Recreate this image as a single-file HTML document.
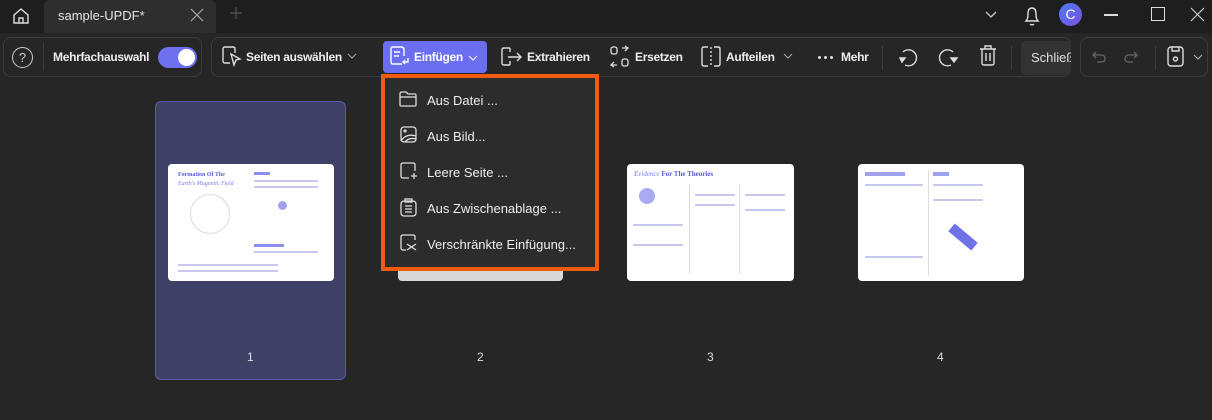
<!DOCTYPE html>
<html><head><meta charset="utf-8"><style>
*{box-sizing:border-box;margin:0;padding:0}
body{width:1212px;height:420px;background:#262626;font-family:"Liberation Sans",sans-serif;color:#e8e8e8;position:relative;overflow:hidden}
.abs{position:absolute}
.top{left:0;top:0;width:1212px;height:33px;background:#1e1e1e}
.tb{top:33px;left:0;width:1212px;height:48px;background:#262626}
.grp{border:1px solid #3c3c3c;border-radius:8px;height:40px;top:37px}
.t{font-size:12px;font-weight:bold;color:#eee;white-space:nowrap;letter-spacing:-0.3px}
svg{position:absolute;overflow:visible}
.page{background:#fff;border-radius:4px}
.menu{left:381px;top:74px;width:218px;height:197px;border:4px solid #f25a0e;background:#2c2c2c}
.mi{position:absolute;left:42px;font-size:13px;color:#eee}
.lbl{font-size:12px;color:#ddd;top:350px}
.ln{height:2px;background:#c8c8ee}
</style></head><body>
<div class="abs top"></div>
<svg style="left:12px;top:7px" width="18" height="18" viewBox="0 0 18 18" fill="none" stroke="#ddd" stroke-width="1.4"><path d="M2 8 L9 2 L16 8 V16 H2 Z"/><path d="M7 16 V11 H11 V16"/></svg>
<div class="abs" style="left:44px;top:0;width:172px;height:33px;background:#2e2e2e;border-radius:6px 6px 0 0"></div>
<div class="abs" style="left:58px;top:8px;font-size:13px;color:#e5e5e5">sample-UPDF*</div>
<svg style="left:191px;top:9px" width="12" height="12" fill="none" stroke="#aaa" stroke-width="1.2"><path d="M0 0 L12 12 M12 0 L0 12"/></svg>
<svg style="left:230px;top:7px" width="12" height="12" fill="none" stroke="#555" stroke-width="1.2"><path d="M6 0 V12 M0 6 H12"/></svg>
<svg style="left:985px;top:11px" width="12" height="8" fill="none" stroke="#ccc" stroke-width="1.3"><path d="M1 1 L6 6 L11 1"/></svg>
<svg style="left:1024px;top:5px" width="16" height="22" fill="none" stroke="#ddd" stroke-width="1.4"><path d="M2 16 Q4 14 4 9 Q4 3 8 3 Q12 3 12 9 Q12 14 14 16 Z M6 19 Q8 21 10 19"/></svg>
<div class="abs" style="left:1059px;top:3px;width:23px;height:23px;border-radius:50%;background:linear-gradient(135deg,#4a7cf5,#7b4fe0);color:#fff;font-size:14px;text-align:center;line-height:23px">C</div>
<div class="abs" style="left:1104px;top:14px;width:14px;height:1.5px;background:#ddd"></div>
<div class="abs" style="left:1151px;top:7px;width:14px;height:14px;border:1.4px solid #ddd"></div>
<svg style="left:1191px;top:8px" width="13" height="13" fill="none" stroke="#ccc" stroke-width="1.2"><path d="M0 0 L13 13 M13 0 L0 13"/></svg>

<div class="abs tb"></div>
<div class="abs grp" style="left:3px;width:199px"></div>
<div class="abs" style="left:12px;top:47px;width:21px;height:21px;border:1.4px solid #ccc;border-radius:50%;font-size:13px;text-align:center;line-height:19px;color:#ccc">?</div>
<div class="abs" style="left:43px;top:43px;width:1px;height:28px;background:#3c3c3c"></div>
<div class="abs t" style="left:53px;top:50px">Mehrfachauswahl</div>
<div class="abs" style="left:158px;top:47px;width:39px;height:21px;border-radius:11px;background:#6e70f0"></div>
<div class="abs" style="left:178px;top:49px;width:17px;height:17px;border-radius:50%;background:#fff"></div>

<div class="abs grp" style="left:211px;width:860px"></div>
<svg style="left:222px;top:46px" width="20" height="22" fill="none" stroke="#ddd" stroke-width="1.4"><path d="M8 17 H3 Q1 17 1 15 V3 Q1 1 3 1 H11 Q13 1 13 3 V7"/><path d="M9 8 L18 13 L14 14 L12 19 Z"/></svg>
<div class="abs t" style="left:246px;top:50px">Seiten auswählen</div>
<svg style="left:348px;top:54px" width="8" height="5" fill="none" stroke="#aaa"><path d="M0 0 L4 4 L8 0"/></svg>
<div class="abs" style="left:383px;top:41px;width:104px;height:32px;border-radius:4px;background:#6c6ef0"></div>
<svg style="left:390px;top:46px" width="20" height="22" fill="none" stroke="#fff" stroke-width="1.4"><path d="M12 18 H3 Q1 18 1 16 V3 Q1 1 3 1 H11 Q14 1 14 4 V10"/><path d="M4 6 H10 M4 10 H9"/><path d="M18 12 V16 H13 M15 14 L13 16 L15 18"/></svg>
<div class="abs t" style="left:414px;top:50px;color:#fff">Einfügen</div>
<svg style="left:469px;top:56px" width="8" height="5" fill="none" stroke="#fff"><path d="M0 0 L4 4 L8 0"/></svg>
<svg style="left:500px;top:46px" width="24" height="22" fill="none" stroke="#ddd" stroke-width="1.4"><path d="M10 19 H4 Q2 19 2 17 V4 Q2 2 4 2 H10"/><path d="M10 2 V6 M10 15 V19 M8 11 H21 M17 7 L21 11 L17 15"/></svg>
<div class="abs t" style="left:527px;top:50px">Extrahieren</div>
<svg style="left:610px;top:46px" width="20" height="22" fill="none" stroke="#ddd" stroke-width="1.3"><rect x="1" y="1" width="6" height="7" rx="2"/><rect x="12" y="13" width="6" height="7" rx="2"/><path d="M12 2 L18 2 M15 0 L18 2 L15 5 M7 19 H1 M4 16 L1 19 L4 21"/></svg>
<div class="abs t" style="left:635px;top:50px">Ersetzen</div>
<svg style="left:701px;top:46px" width="20" height="22" fill="none" stroke="#ddd" stroke-width="1.4"><path d="M7 1 H3 Q1 1 1 3 V18 Q1 20 3 20 H7 M13 1 H17 Q19 1 19 3 V18 Q19 20 17 20 H13"/><path d="M10 1 V20" stroke-dasharray="2 2"/></svg>
<div class="abs t" style="left:726px;top:50px">Aufteilen</div>
<svg style="left:784px;top:54px" width="8" height="5" fill="none" stroke="#aaa"><path d="M0 0 L4 4 L8 0"/></svg>
<div class="abs" style="left:818px;top:56px;width:3px;height:3px;border-radius:50%;background:#ddd;box-shadow:6px 0 #ddd,12px 0 #ddd"></div>
<div class="abs t" style="left:841px;top:50px">Mehr</div>
<div class="abs" style="left:882px;top:46px;width:1px;height:24px;background:#3c3c3c"></div>
<svg style="left:897px;top:46px" width="22" height="22" fill="none" stroke="#ddd" stroke-width="1.4"><path d="M6 6 A8 8 0 1 1 8 19"/><path d="M3 12 L5 16 L8 12 Z" fill="#ddd"/></svg>
<svg style="left:937px;top:46px" width="22" height="22" fill="none" stroke="#ddd" stroke-width="1.4"><path d="M16 6 A8 8 0 1 0 14 19"/><path d="M14 12 L17 16 L20 12 Z" fill="#ddd"/></svg>
<svg style="left:978px;top:44px" width="20" height="24" fill="none" stroke="#ddd" stroke-width="1.4"><path d="M2 5 H18 M7 5 V2 H13 V5 M4 5 V19 Q4 21 6 21 H14 Q16 21 16 19 V5 M8 9 V17 M12 9 V17"/></svg>
<div class="abs" style="left:1011px;top:46px;width:1px;height:24px;background:#3c3c3c"></div>
<div class="abs" style="left:1021px;top:41px;width:50px;height:34px;background:#333;border-radius:5px;overflow:hidden"><div style="position:absolute;left:10px;top:9px;font-size:13px;color:#e0e0e0;white-space:nowrap">Schließen</div></div>
<div class="abs grp" style="left:1080px;width:128px"></div>
<svg style="left:1092px;top:51px" width="14" height="12" fill="none" stroke="#666" stroke-width="1.3"><path d="M4 1 L1 4 L4 7 M1 4 H9 Q13 4 13 8 Q13 11 9 11 H5"/></svg>
<svg style="left:1124px;top:51px" width="14" height="12" fill="none" stroke="#666" stroke-width="1.3"><path d="M10 1 L13 4 L10 7 M13 4 H5 Q1 4 1 8 Q1 11 5 11 H9"/></svg>
<div class="abs" style="left:1155px;top:46px;width:1px;height:24px;background:#3c3c3c"></div>
<svg style="left:1167px;top:46px" width="18" height="22" fill="none" stroke="#ddd" stroke-width="1.4"><rect x="1" y="1" width="15" height="19" rx="3"/><path d="M5 1 V5 H12 V1"/><circle cx="8.5" cy="13" r="2"/></svg>
<svg style="left:1194px;top:55px" width="8" height="5" fill="none" stroke="#bbb"><path d="M0 0 L4 4 L8 0"/></svg>

<div class="abs" style="left:155px;top:101px;width:191px;height:279px;background:#3f4068;border:1px solid #5a5cb0;border-radius:6px"></div>
<div class="abs page" style="left:168px;top:164px;width:166px;height:117px;padding:8px 10px">
 <div style="font-family:'Liberation Serif',serif;font-size:6px;font-weight:bold;color:#5a5cd8">Formation Of The</div>
 <div style="font-family:'Liberation Serif',serif;font-size:6px;font-style:italic;color:#7a7ce8;margin-top:3px">Earth's Magnetic Field</div>
 <div class="abs" style="left:22px;top:30px;width:40px;height:40px;border:1px solid #d8d8ee;border-radius:50%"></div>
 <div class="abs" style="left:86px;top:8px;width:16px;height:3px;background:#8e90f0"></div>
 <div class="abs ln" style="left:86px;top:16px;width:64px"></div><div class="abs ln" style="left:86px;top:22px;width:64px"></div>
 <div class="abs" style="left:110px;top:37px;width:9px;height:9px;background:#a0a2f0;border-radius:50%"></div>
 <div class="abs" style="left:86px;top:80px;width:30px;height:3px;background:#8e90f0"></div>
 <div class="abs ln" style="left:86px;top:87px;width:64px"></div>
 <div class="abs ln" style="left:10px;top:100px;width:100px"></div><div class="abs ln" style="left:10px;top:106px;width:100px"></div>
</div>
<div class="abs" style="left:398px;top:265px;width:165px;height:16px;background:#d8d8d8;border-radius:4px"></div>
<div class="abs page" style="left:627px;top:164px;width:167px;height:117px;padding:6px 7px">
 <div style="font-family:'Liberation Serif',serif;font-size:7px;font-weight:bold;color:#5a5cd8"><i style="font-weight:normal;color:#7a7ce8">Evidence</i> For The Theories</div>
 <div class="abs" style="left:12px;top:24px;width:16px;height:16px;background:#a8aaf2;border-radius:50%"></div>
 <div class="abs" style="left:62px;top:20px;width:1px;height:90px;background:#ddd"></div>
 <div class="abs" style="left:112px;top:20px;width:1px;height:90px;background:#ddd"></div>
 <div class="abs ln" style="left:68px;top:30px;width:40px"></div><div class="abs ln" style="left:68px;top:40px;width:40px"></div>
 <div class="abs ln" style="left:118px;top:30px;width:40px"></div><div class="abs ln" style="left:118px;top:45px;width:40px"></div>
 <div class="abs ln" style="left:6px;top:60px;width:50px"></div><div class="abs ln" style="left:6px;top:80px;width:50px"></div>
</div>
<div class="abs page" style="left:858px;top:164px;width:166px;height:117px">
 <div class="abs" style="left:7px;top:8px;width:40px;height:4px;background:#a0a2f0"></div>
 <div class="abs" style="left:75px;top:8px;width:16px;height:4px;background:#a0a2f0"></div>
 <div class="abs" style="left:70px;top:6px;width:1px;height:106px;background:#ddd"></div>
 <div class="abs ln" style="left:7px;top:20px;width:58px"></div><div class="abs ln" style="left:75px;top:20px;width:50px"></div>
 <div class="abs ln" style="left:75px;top:35px;width:50px"></div><div class="abs ln" style="left:7px;top:92px;width:58px"></div>
 <div class="abs" style="left:90px;top:68px;width:30px;height:10px;background:#7072e8;transform:rotate(40deg)"></div>
</div>
<div class="abs lbl" style="left:247px">1</div>
<div class="abs lbl" style="left:477px">2</div>
<div class="abs lbl" style="left:707px">3</div>
<div class="abs lbl" style="left:937px">4</div>

<div class="abs menu">
 <svg style="left:14px;top:13px" width="18" height="16" fill="none" stroke="#ddd" stroke-width="1.3"><path d="M1 3 Q1 1 3 1 H7 L9 3 H16 Q17 3 17 5 V14 Q17 15 16 15 H2 Q1 15 1 14 Z M1 6 H17"/></svg>
 <div class="mi" style="top:15px">Aus Datei ...</div>
 <svg style="left:15px;top:48px" width="17" height="17" fill="none" stroke="#ddd" stroke-width="1.3"><rect x="1" y="1" width="15" height="15" rx="3"/><circle cx="5" cy="5" r="1"/><path d="M1 15 Q6 7 16 10 M5 16 Q9 11 16 13"/></svg>
 <div class="mi" style="top:51px">Aus Bild...</div>
 <svg style="left:15px;top:84px" width="18" height="18" fill="none" stroke="#ddd" stroke-width="1.3"><path d="M9 16 H3 Q1 16 1 14 V3 Q1 1 3 1 H13 Q15 1 15 3 V9 M11 14 H17 M14 11 V17"/></svg>
 <div class="mi" style="top:87px">Leere Seite ...</div>
 <svg style="left:15px;top:120px" width="17" height="19" fill="none" stroke="#ddd" stroke-width="1.3"><rect x="1" y="3" width="15" height="15" rx="3"/><rect x="5" y="1" width="7" height="3"/><path d="M5 8 H12 M5 11 H12 M5 14 H12"/></svg>
 <div class="mi" style="top:123px">Aus Zwischenablage ...</div>
 <svg style="left:15px;top:156px" width="18" height="18" fill="none" stroke="#ddd" stroke-width="1.3"><path d="M6 16 H3 Q1 16 1 14 V3 Q1 1 3 1 H13 Q15 1 15 3 V6 M7 10 L16 16 M7 16 L16 10"/></svg>
 <div class="mi" style="top:159px">Verschränkte Einfügung...</div>
</div>
</body></html>
